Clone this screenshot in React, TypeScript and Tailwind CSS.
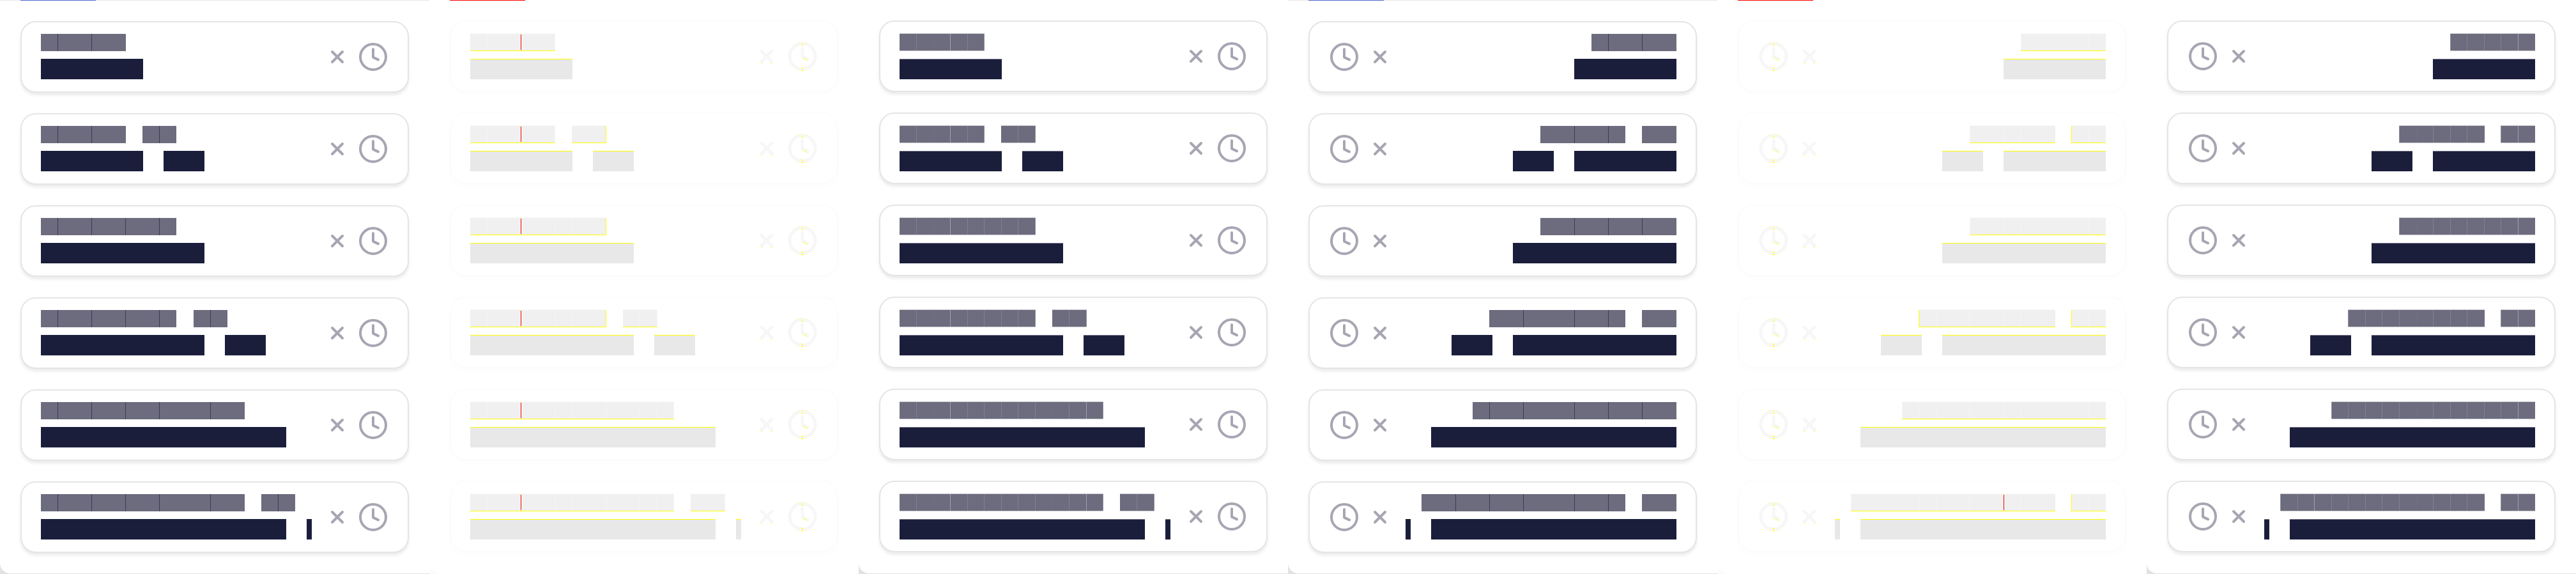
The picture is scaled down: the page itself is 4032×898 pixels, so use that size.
type Kind = "sharp" | "diff" | "soft";

type Row = { label: number[]; value: number[] };

const GLYPH = 26.56;

const rows: Row[] = [
  { label: [5], value: [160] },
  { label: [5, 2], value: [160, 64] },
  { label: [8], value: [256] },
  { label: [8, 2], value: [256, 64] },
  { label: [12], value: [384] },
  { label: [12, 2], value: [384, 8] },
];

const panels: { kind: Kind; rtl: boolean }[] = [
  { kind: "sharp", rtl: false },
  { kind: "diff", rtl: false },
  { kind: "soft", rtl: false },
  { kind: "sharp", rtl: true },
  { kind: "diff", rtl: true },
  { kind: "soft", rtl: true },
];

const cardStyle: Record<Kind, string> = {
  sharp: "border-[#e5e5e5] shadow-[0_4px_4px_rgba(0,0,0,0.08)]",
  diff: "border-[#fcfcfc] shadow-[0_4px_8px_rgba(0,0,0,0.01)]",
  soft: "border-[#e5e5e5] shadow-[0_4px_4px_rgba(0,0,0,0.08)]",
};

const cellStyle: Record<Kind, string> = {
  sharp: "h-[27px] bg-[#6c6c7e]",
  diff: "h-7 border-t border-b border-t-[#fafafa] border-b-[#ffff00] bg-[#f0f0f0]",
  soft: "h-7 border-y border-[#c9c9d0] bg-[#6c6c7e]",
};

const valueStyle: Record<Kind, string> = {
  sharp: "bg-[#1b1e3b]",
  diff: "border-t border-[#ffff00] bg-[#e8e8e8]",
  soft: "border-t border-[#76788a] bg-[#1b1e3b]",
};

const RED = "mt-px h-[27px] border-t border-b-2 border-[#ffff00] bg-[#ff0000]";

function seamStyle(kind: Kind, rtl: boolean, k: number, last: boolean, row: number): string | null {
  if (kind === "sharp") {
    const marks = rtl ? [2, 4, 6, 9, 11, 13] : [1, 3, 5, 7, 10, 14];
    return !last && marks.includes(k) ? "h-[27px] bg-[#3a3a55]" : null;
  }
  if (kind === "diff") {
    if (!rtl && k === 3) return RED;
    if (rtl && k === 6 && row === 5) return RED;
    if (last && (rtl ? k === 2 || k === 11 : k === 8)) return "h-7 border-y border-t-[#fafafa] border-b-[#ffff00] bg-[#ffff00]";
    if (last || [1, 5, 6, 8, 10, 11].includes(k)) return "h-7 border-y border-t-[#fafafa] border-b-[#ffff00] bg-[#f5f5f5]";
    return null;
  }
  if (last) return "h-7 border-y border-[#d5d5dc] bg-[#8f90a0]";
  const strong = rtl ? [1, 13] : [3, 11];
  const faint = rtl ? [7, 15] : [2, 9];
  if (strong.includes(k)) return "h-7 border-y border-[#c9c9d0] bg-[#a0a0ae]";
  if (faint.includes(k)) return "h-7 border-y border-[#c9c9d0] bg-[#6f7082]";
  return "h-7 border-y border-[#c9c9d0] bg-[#80818f]";
}

function Label({ kind, rtl, groups, row }: { kind: Kind; rtl: boolean; groups: number[]; row: number }) {
  const edge = (k: number) => (kind === "sharp" && !rtl ? Math.round(k * GLYPH) : Math.ceil(k * GLYPH));
  const start = (k: number) => (kind === "sharp" ? edge(k) : Math.floor(k * GLYPH));
  const ordered = rtl ? [...groups].reverse() : groups;
  let index = 0;
  let pen = 0;
  return (
    <div className="flex">
      {ordered.map((count, g) => {
        const first = index;
        const gap = start(first) - pen;
        index += count + 1;
        pen = edge(first + count);
        return (
          <div key={g} className="flex" style={{ marginInlineStart: gap }}>
            {Array.from({ length: count }, (_, i) => {
              const k = first + i + 1;
              const from = i === 0 ? start(first) : edge(k - 1);
              const seam = seamStyle(kind, rtl, k, i === count - 1, row);
              return (
                <div key={k} className="flex" style={{ width: edge(k) - from }}>
                  <span className={`flex-1 ${cellStyle[kind]}`} />
                  {seam && <span className={`w-px ${seam}`} />}
                </div>
              );
            })}
          </div>
        );
      })}
    </div>
  );
}

function CloseIcon({ kind }: { kind: Kind }) {
  const diff = kind === "diff";
  return (
    <svg viewBox="0 0 32 32" className="block size-8" fill="none" aria-hidden="true">
      <path d="M8 8 24 24M24 8 8 24" stroke={diff ? "#f7f7f7" : "#a6a6b3"} strokeWidth={diff ? 5 : 4} strokeLinecap="round" />
      {diff && <path d="M7 26h2v1H7zM23 26h2v1h-2z" fill="#ffff00" />}
    </svg>
  );
}

function ClockIcon({ kind }: { kind: Kind }) {
  const diff = kind === "diff";
  const color = diff ? "#f7f7f7" : "#a6a6b3";
  return (
    <svg viewBox="0 0 48 48" className="block size-12" fill="none" aria-hidden="true">
      <circle cx="24" cy="24" r="20" stroke={color} strokeWidth={diff ? 5 : 4} />
      <path d="M24 12v12.6l8 3.8" stroke={color} strokeWidth={diff ? 5 : 4} strokeLinecap="round" strokeLinejoin="round" />
      {diff && (
        <path
          d="M23 2h2v1h-2zM17 3h1v1h-1zM30 3h1v1h-1zM22 6h4v1h-4zM22 42h4v1h-4zM22 46h4v1h-4zM17 45h1v1h-1zM30 45h1v1h-1zM23 26h1v1h-1zM25 27h1v1h-1zM27 28h2v1h-2zM29 29h1v1h-1zM31 30h1v1h-1z"
          fill="#ffff00"
        />
      )}
    </svg>
  );
}

function Card({ kind, rtl, row, index }: { kind: Kind; rtl: boolean; row: Row; index: number }) {
  return (
    <li className={`flex h-28 items-start justify-between rounded-3xl border-2 bg-white px-[30px] pt-[18px] ${cardStyle[kind]}`}>
      <div className={`flex flex-col ${kind === "sharp" ? "gap-3" : "gap-3"}`}>
        <Label kind={kind} rtl={rtl} groups={row.label} row={index} />
        <div className="flex gap-8">
          {row.value.map((width, i) => (
            <span key={i} className={`h-8 ${valueStyle[kind]}`} style={{ width }} />
          ))}
        </div>
      </div>
      <div className="flex items-center gap-4 self-center pb-[18px]">
        <button type="button" aria-label="Clear">
          <CloseIcon kind={kind} />
        </button>
        <button type="button" aria-label="Choose time">
          <ClockIcon kind={kind} />
        </button>
      </div>
    </li>
  );
}

function Panel({ kind, rtl }: { kind: Kind; rtl: boolean }) {
  return (
    <section dir={rtl ? "rtl" : "ltr"} className={kind === "diff" ? "bg-[#fcfcfc]" : "bg-[#e2e2e2]"}>
      {kind === "sharp" && (
        <div dir="ltr" className="flex h-px bg-[#e5e5e5] px-8">
          <span className="w-[118px] bg-[#4d66d0]" />
        </div>
      )}
      <div className={`rounded-bl-2xl bg-white ${kind === "sharp" ? "" : "pb-px"}`}>
        {kind === "diff" && (
          <div dir="ltr" className="-mb-px flex h-px px-8">
            <span className="w-[118px] bg-[#ff0000]" />
          </div>
        )}
        <ul className="flex flex-col gap-8 p-8">
          {rows.map((row, i) => (
            <Card key={i} kind={kind} rtl={rtl} row={row} index={i} />
          ))}
        </ul>
      </div>
      <div className="h-px" />
    </section>
  );
}

export default function App() {
  return (
    <main className="grid grid-cols-6 bg-white">
      {panels.map((panel, i) => (
        <Panel key={i} kind={panel.kind} rtl={panel.rtl} />
      ))}
    </main>
  );
}
